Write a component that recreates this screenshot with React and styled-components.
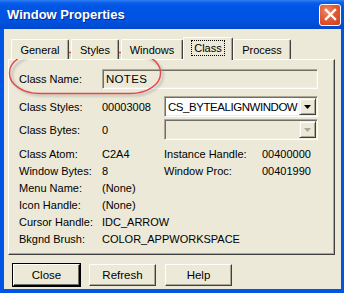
import React from 'react'
import styled, { createGlobalStyle } from 'styled-components'

const GlobalStyle = createGlobalStyle`
  html, body {
    margin: 0;
    padding: 0;
    background: #0054E3;
  }
`

const Window = styled.div`
  position: relative;
  width: 344px;
  height: 293px;
  display: flex;
  flex-direction: column;
  background: #0055E5;
  font-family: "Liberation Sans", Arial, sans-serif;
  font-size: 11px;
  color: #000;
  overflow: hidden;
`

const TitleBar = styled.div`
  height: 29px;
  flex: none;
  display: flex;
  align-items: center;
  justify-content: space-between;
  padding: 0 3px 0 7px;
  background: linear-gradient(#2F80F5 0px, #0A5CE8 3px, #0055E5 7px, #0053E1 20px, #0049CC 29px);
`

const Title = styled.span`
  color: #fff;
  font-weight: bold;
  font-size: 13px;
  text-shadow: 1px 1px #0A2A8A;
`

const CloseBox = styled.div`
  width: 20px;
  height: 20px;
  border: 1px solid #fff;
  border-radius: 3px;
  display: flex;
  align-items: center;
  justify-content: center;
  background: radial-gradient(circle at 35% 30%, #F0896B 0%, #E05A33 45%, #C9401D 100%);
`

const Client = styled.div`
  flex: 1;
  margin: 0 3px 4px 4px;
  background: #ECE9D8;
  display: flex;
  flex-direction: column;
  padding: 7px 6px 0 4px;
`

const TabRow = styled.div`
  display: flex;
  align-items: flex-end;
  height: 23px;
  padding-left: 3px;
  gap: 2px;
  position: relative;
  z-index: 1;
`

const Tab = styled.div`
  box-sizing: border-box;
  width: ${p => p.$w}px;
  height: ${p => (p.$active ? 23 : 20)}px;
  margin: ${p => (p.$active ? '0 -2px -1px -2px' : '0')};
  display: flex;
  align-items: center;
  justify-content: center;
  background: #ECE9D8;
  border-top: 1px solid #fff;
  border-left: 1px solid #fff;
  border-right: 1px solid #404040;
  border-radius: 2px 2px 0 0;
  box-shadow: inset -1px 0 #ACA899;
  padding-bottom: ${p => (p.$active ? 3 : 0)}px;
`

const TabLabel = styled.span`
  padding: 1px 2px;
  outline: ${p => (p.$focus ? '1px dotted #000' : 'none')};
`

const Panel = styled.div`
  flex: none;
  height: 196px;
  box-sizing: border-box;
  border-top: 1px solid #fff;
  border-left: 1px solid #fff;
  border-right: 1px solid #404040;
  border-bottom: 1px solid #404040;
  box-shadow: inset -1px -1px #ACA899;
  padding: 9px 0 0 10px;
  display: flex;
  flex-direction: column;
`

const Row = styled.div`
  display: grid;
  grid-template-columns: 83px 62px 98px 56px;
  align-items: center;
  height: ${p => p.$h || 17}px;
  margin-top: ${p => p.$top || 0}px;
`

const Label = styled.span`
  white-space: nowrap;
`

const Sunken = styled.div`
  box-sizing: border-box;
  grid-column: ${p => p.$span};
  height: ${p => p.$h}px;
  display: flex;
  align-items: center;
  background: ${p => (p.$white ? '#fff' : '#ECE9D8')};
  border-top: 1px solid #ACA899;
  border-left: 1px solid #ACA899;
  border-bottom: 1px solid #fff;
  border-right: 1px solid #fff;
  box-shadow: inset 1px 1px #716F64, inset -1px -1px #F1EFE2;
  padding: 0 2px 0 3px;
`

const ComboText = styled.span`
  flex: 1;
  font-size: 11.5px;
  letter-spacing: ${p => (p.$tight ? '-0.45px' : '0.3px')};
  white-space: nowrap;
  overflow: hidden;
`

const ArrowButton = styled.div`
  box-sizing: border-box;
  width: 17px;
  height: 17px;
  margin-right: -1px;
  flex: none;
  display: flex;
  align-items: center;
  justify-content: center;
  background: #ECE9D8;
  border-top: 1px solid #F1EFE2;
  border-left: 1px solid #F1EFE2;
  border-right: 1px solid #404040;
  border-bottom: 1px solid #404040;
  box-shadow: inset 1px 1px #fff, inset -1px -1px #ACA899;
`

const ButtonRow = styled.div`
  display: flex;
  gap: 9px;
  padding: 9px 0 0 5px;
`

const Button = styled.div`
  box-sizing: border-box;
  width: 67px;
  height: 22px;
  display: flex;
  align-items: center;
  justify-content: center;
  font-size: 11.5px;
  background: #ECE9D8;
  border-top: 1px solid #fff;
  border-left: 1px solid #fff;
  border-right: 1px solid #404040;
  border-bottom: 1px solid #404040;
  box-shadow: inset -1px -1px #ACA899;
  ${p => p.$default && 'border-right-color: #000; border-bottom-color: #000; box-shadow: inset -1px -1px #716F64, 0 0 0 1px #000;'}
`

const Highlight = styled.svg`
  position: absolute;
  left: 6px;
  top: 49px;
  pointer-events: none;
`

const Arrow = ({ color }) => (
  <svg width="7" height="4" viewBox="0 0 7 4">
    <path d="M0 0h7L3.5 4z" fill={color} />
  </svg>
)

const tabs = [
  { name: 'General', w: 58 },
  { name: 'Styles', w: 48 },
  { name: 'Windows', w: 62 },
  { name: 'Class', w: 50, active: true },
  { name: 'Process', w: 58 },
]

const simpleRows = [
  ['Menu Name:', '(None)'],
  ['Icon Handle:', '(None)'],
  ['Cursor Handle:', 'IDC_ARROW'],
  ['Bkgnd Brush:', 'COLOR_APPWORKSPACE'],
]

export default function App() {
  return (
    <Window>
      <GlobalStyle />
      <TitleBar>
        <Title>Window Properties</Title>
        <CloseBox>
          <svg width="13" height="13" viewBox="0 0 13 13">
            <path d="M2 2L11 11M11 2L2 11" stroke="#fff" strokeWidth="2.4" strokeLinecap="square" />
          </svg>
        </CloseBox>
      </TitleBar>
      <Client>
        <TabRow>
          {tabs.map(t => (
            <Tab key={t.name} $w={t.w} $active={t.active}>
              <TabLabel $focus={t.active}>{t.name}</TabLabel>
            </Tab>
          ))}
        </TabRow>
        <Panel>
          <Row $h={20}>
            <Label>Class Name:</Label>
            <Sunken $span="2 / 5" $h={20}>
              <ComboText>NOTES</ComboText>
            </Sunken>
          </Row>
          <Row $h={21} $top={7}>
            <Label>Class Styles:</Label>
            <span>00003008</span>
            <Sunken $span="3 / 5" $h={21} $white>
              <ComboText $tight>CS_BYTEALIGNWINDOW</ComboText>
              <ArrowButton><Arrow color="#000" /></ArrowButton>
            </Sunken>
          </Row>
          <Row $h={21} $top={2}>
            <Label>Class Bytes:</Label>
            <span>0</span>
            <Sunken $span="3 / 5" $h={21}>
              <ComboText />
              <ArrowButton><Arrow color="#ACA899" /></ArrowButton>
            </Sunken>
          </Row>
          <Row $top={5}>
            <Label>Class Atom:</Label>
            <span>C2A4</span>
            <Label>Instance Handle:</Label>
            <span>00400000</span>
          </Row>
          <Row>
            <Label>Window Bytes:</Label>
            <span>8</span>
            <Label>Window Proc:</Label>
            <span>00401990</span>
          </Row>
          {simpleRows.map(([k, v]) => (
            <Row key={k}>
              <Label>{k}</Label>
              <Label>{v}</Label>
            </Row>
          ))}
        </Panel>
        <ButtonRow>
          <Button $default>Close</Button>
          <Button>Refresh</Button>
          <Button>Help</Button>
        </ButtonRow>
      </Client>
      <Highlight width="160" height="50" viewBox="0 0 160 50">
        <defs>
          <filter id="sh" x="-10%" y="-20%" width="130%" height="150%">
            <feGaussianBlur stdDeviation="1.2" />
          </filter>
        </defs>
        <rect x="4.5" y="5" width="151" height="40" rx="30" ry="20" fill="none" stroke="#9A9A9A" strokeOpacity="0.5" strokeWidth="2" filter="url(#sh)" transform="translate(1.5 1.5)" />
        <rect x="3.5" y="3.5" width="151" height="41" rx="30" ry="20" fill="none" stroke="#E8474A" strokeWidth="1.4" />
      </Highlight>
    </Window>
  )
}
